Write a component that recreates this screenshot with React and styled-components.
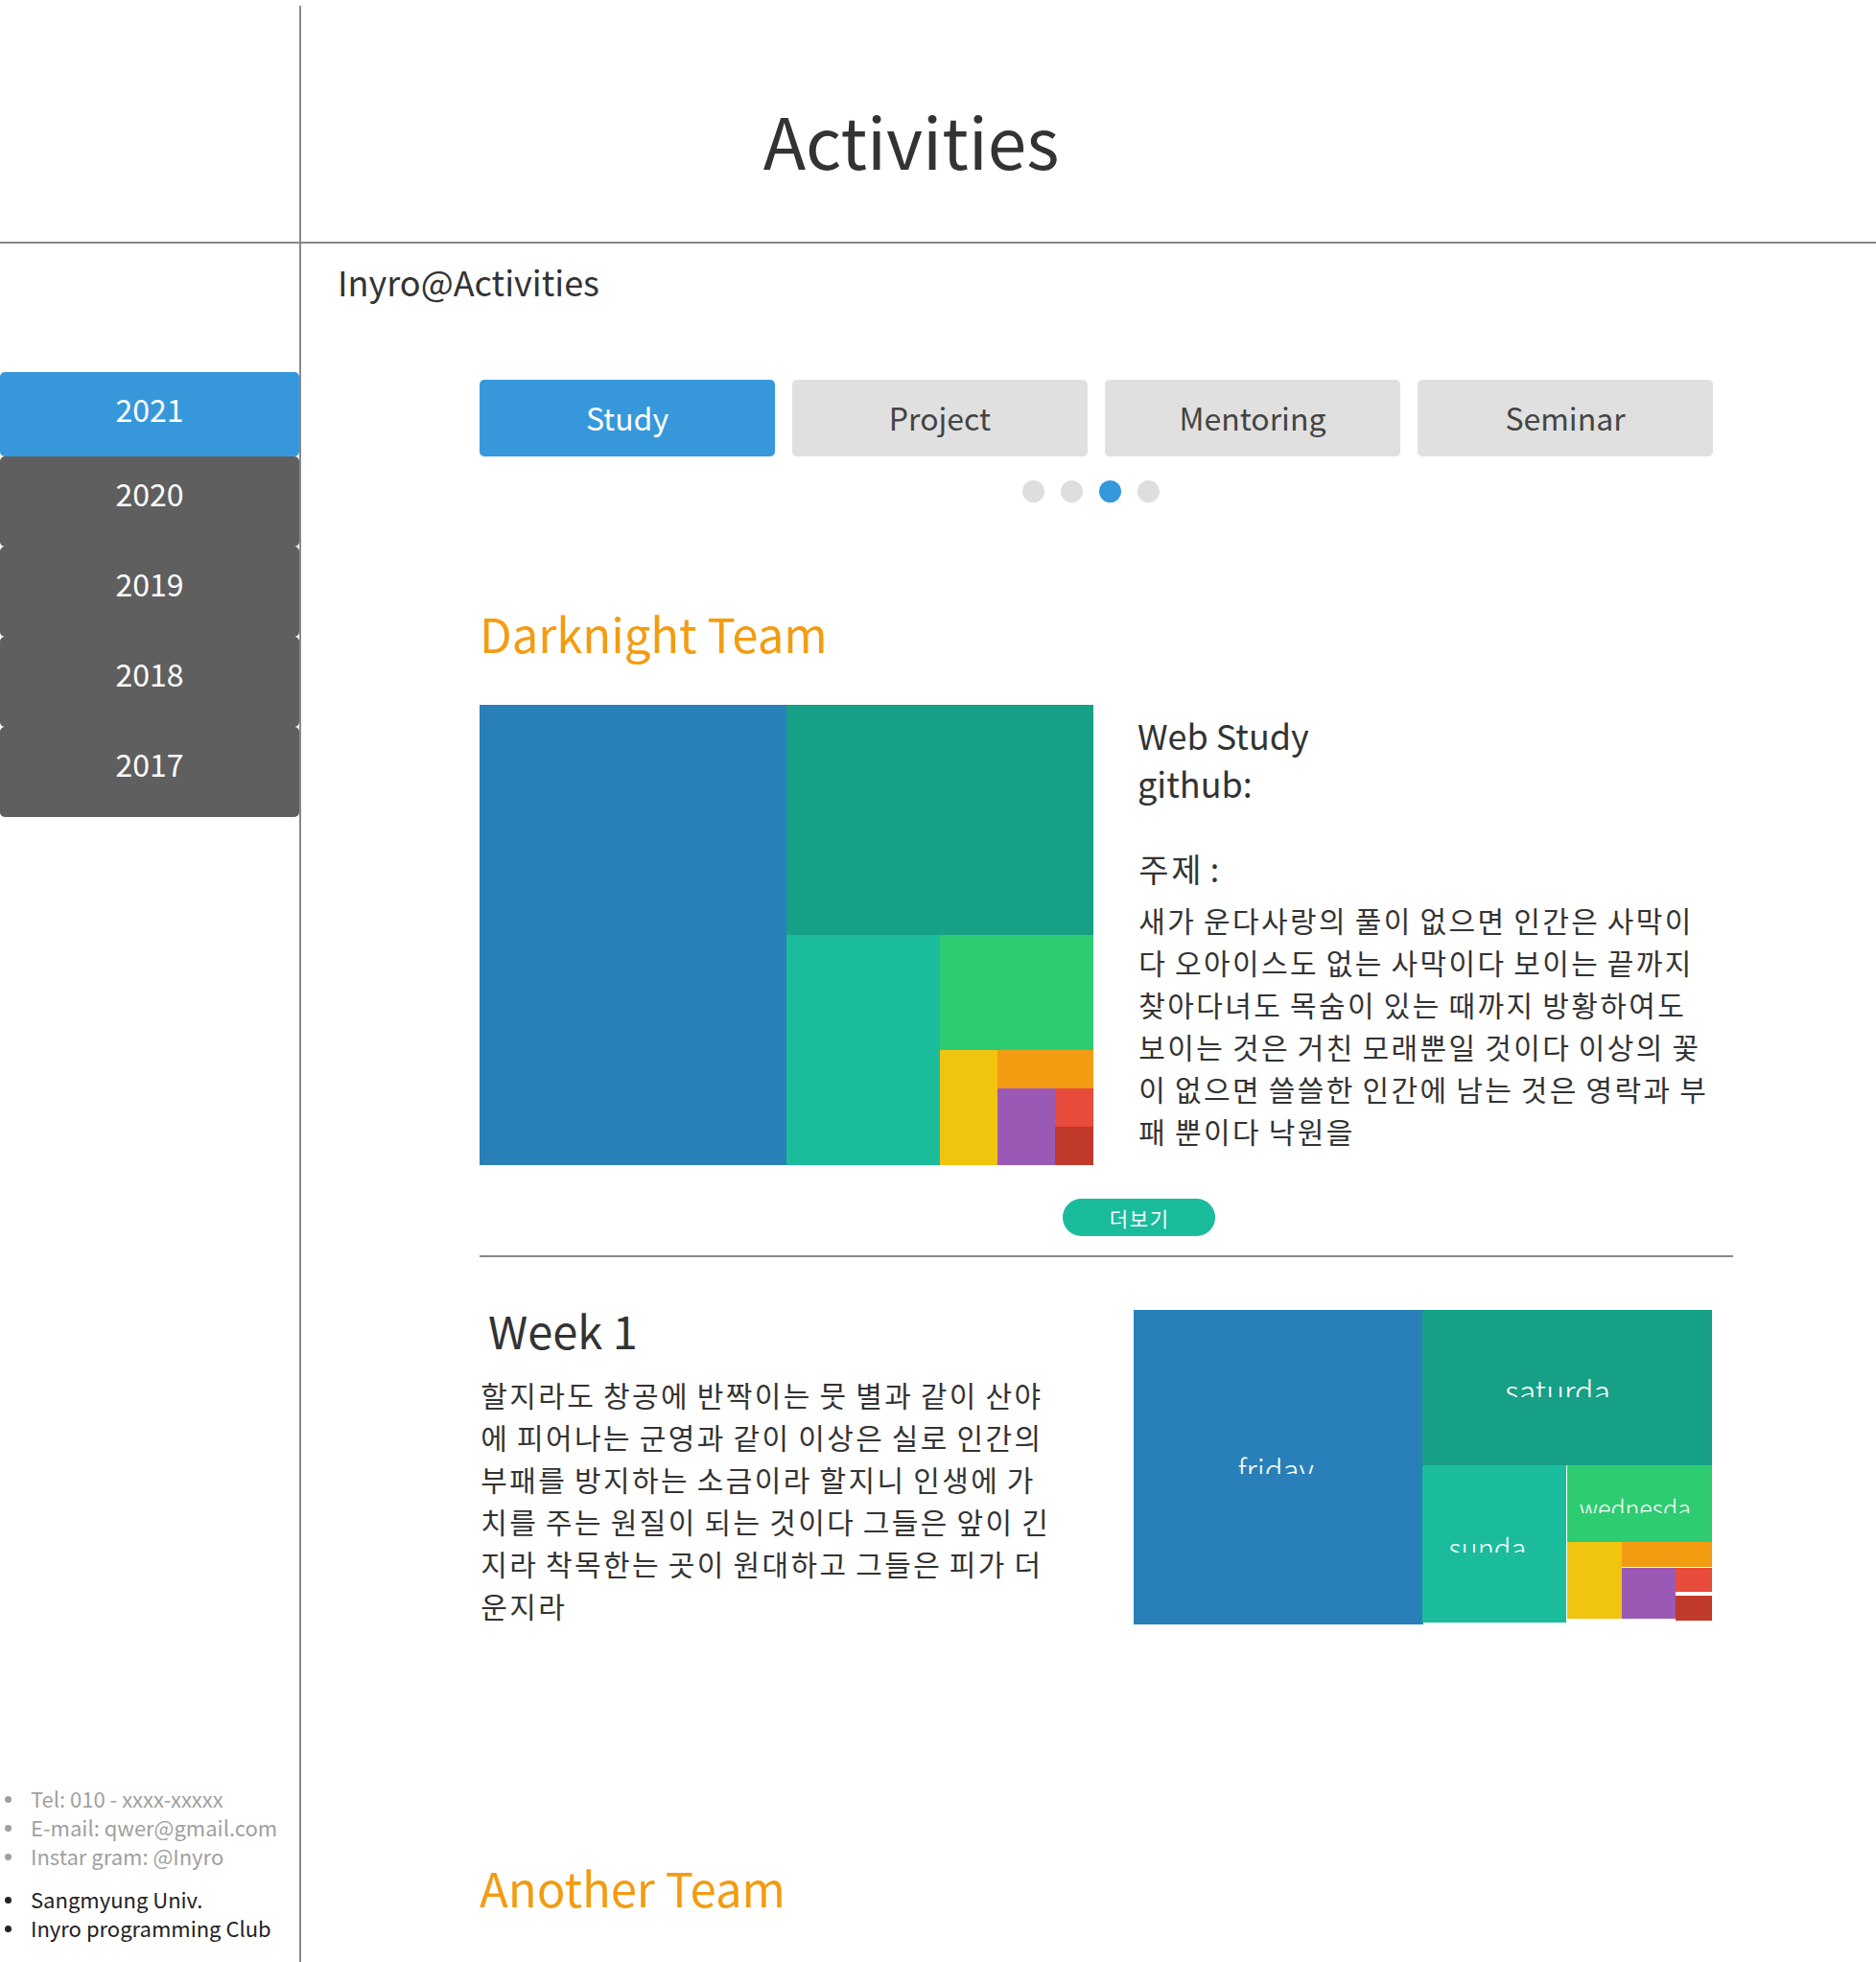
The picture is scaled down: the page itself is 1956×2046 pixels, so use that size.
import React from 'react';
import styled, { createGlobalStyle } from 'styled-components';

const GlobalStyle = createGlobalStyle`
  html, body {
    margin: 0;
    padding: 0;
    background: #fff;
  }
  body {
    font-family: "Noto Sans CJK KR", "Noto Sans", sans-serif;
    color: #333;
  }
  * {
    box-sizing: border-box;
  }
`;

const Page = styled.div`
  display: grid;
  grid-template-columns: 314px 1fr;
  grid-template-rows: 254px 1fr;
  height: 100vh;
  overflow: hidden;
`;

const Corner = styled.div`
  margin-top: 6px;
  border-right: 2px solid #888;
  border-bottom: 2px solid #888;
`;

const Header = styled.header`
  border-bottom: 2px solid #888;
  padding: 105px 370px 0 0;
  text-align: center;
`;

const PageTitle = styled.h1`
  margin: 0;
  font-size: 73px;
  font-weight: 400;
  line-height: 80px;
  color: #333;
`;

const Sidebar = styled.aside`
  display: flex;
  flex-direction: column;
  border-right: 2px solid #888;
  min-height: 0;
`;

const YearList = styled.ul`
  list-style: none;
  margin: 134px 0 0;
  padding: 0;
`;

const YearItem = styled.li`
  height: ${({ $active }) => ($active ? '88px' : '94px')};
  padding-top: 18px;
  border-radius: 5px;
  background: ${({ $active }) => ($active ? '#3698db' : '#5f5f5f')};
  color: #fff;
  font-size: 32px;
  line-height: 40px;
  text-align: center;
`;

const Contact = styled.div`
  margin-top: auto;
  padding-bottom: 21px;
  display: flex;
  flex-direction: column;
  gap: 15px;
`;

const InfoList = styled.ul`
  list-style: none;
  margin: 0;
  padding: 0;
  color: ${({ $muted }) => ($muted ? '#a0a0a0' : '#222')};
`;

const InfoItem = styled.li`
  display: flex;
  align-items: center;
  font-size: 22px;
  line-height: 30px;
  white-space: nowrap;

  &::before {
    content: '';
    flex-shrink: 0;
    width: 7px;
    height: 7px;
    margin: 2px 20px 0 5px;
    border-radius: 50%;
    background: currentColor;
  }
`;

const Main = styled.main`
  display: flex;
  flex-direction: column;
  min-width: 0;
`;

const SubTitle = styled.h2`
  margin: 17px 0 0 38px;
  font-size: 36px;
  font-weight: 400;
  line-height: 44px;
  color: #333;
`;

const Content = styled.div`
  display: flex;
  flex-direction: column;
  margin-left: 186px;
`;

const Tabs = styled.div`
  display: grid;
  grid-template-columns: repeat(4, 1fr);
  gap: 18px;
  width: 1286px;
  margin-top: 81px;
`;

const Tab = styled.button`
  height: 80px;
  border: none;
  border-radius: 5px;
  background: ${({ $active }) => ($active ? '#3698db' : '#e0e0e0')};
  color: ${({ $active }) => ($active ? '#fff' : '#444')};
  font-family: inherit;
  font-size: 32px;
  display: flex;
  align-items: center;
  justify-content: center;
  padding-bottom: 3px;
`;

const Dots = styled.div`
  display: flex;
  justify-content: center;
  gap: 17px;
  width: 1286px;
  margin-top: 25px;
  padding-right: 11px;
`;

const Dot = styled.span`
  width: 23px;
  height: 23px;
  border-radius: 50%;
  background: ${({ $active }) => ($active ? '#3498db' : '#dedede')};
`;

const TeamTitle = styled.h2`
  margin: ${({ $gap }) => $gap}px 0 0;
  font-size: 49px;
  font-weight: 400;
  line-height: 60px;
  color: #f39c12;
`;

const TeamRow = styled.div`
  display: flex;
  align-items: flex-start;
  gap: 46px;
  margin-top: 45px;
`;

const TeamText = styled.div`
  width: 600px;
  padding-top: 6px;
`;

const InfoHead = styled.div`
  font-size: 36px;
  line-height: 50px;
`;

const TopicLabel = styled.div`
  margin-top: 42px;
  font-size: 34px;
  line-height: 46px;
`;

const Body = styled.p`
  margin: ${({ $gap }) => $gap}px 0 0;
  font-size: 30px;
  line-height: 44px;
  word-spacing: 1px;
  color: #333;
`;

/* one Hangul syllable set in a full-width cell, as the reference font does */
const Syl = styled.span`
  display: inline-block;
  width: 1em;
  text-align: center;
`;

const Hangul = ({ text }) =>
  Array.from(text).map((ch, i) => (ch === ' ' || ch === ':' ? ch : <Syl key={i}>{ch}</Syl>));

const MoreButton = styled.button`
  align-self: flex-start;
  width: 159px;
  height: 39px;
  margin: 35px 0 0 608px;
  border: none;
  border-radius: 20px;
  background: #1abc9c;
  color: #fff;
  font-family: inherit;
  font-size: 21px;
  display: flex;
  align-items: center;
  justify-content: center;
`;

const Divider = styled.hr`
  width: 1307px;
  height: 0;
  margin: 20px 0 0;
  border: 0;
  border-top: 2px solid #888;
`;

const WeekRow = styled.div`
  display: flex;
  align-items: flex-start;
  gap: 82px;
  margin-top: 50px;
`;

const WeekText = styled.div`
  width: 600px;
`;

const WeekTitle = styled.h3`
  margin: -2px 0 0;
  padding-left: 9px;
  font-size: 47px;
  font-weight: 400;
  line-height: 56px;
  color: #333;
`;

const ChartBox = styled.div`
  margin-top: ${({ $offset }) => $offset || 0}px;

  svg {
    display: block;
  }
`;

const Treemap = ({ id, width, height, cells }) => (
  <svg width={width} height={height} viewBox={`0 0 ${width} ${height}`}>
    <defs>
      {cells
        .filter((c) => c.label)
        .map((c) => (
          <clipPath key={c.label} id={`${id}-${c.label}`}>
            <rect x={c.clip[0]} y={c.clip[1]} width={c.clip[2]} height={c.clip[3]} />
          </clipPath>
        ))}
    </defs>
    {cells.map((c, i) => (
      <rect key={i} x={c.x} y={c.y} width={c.w} height={c.h} fill={c.color} />
    ))}
    {cells
      .filter((c) => c.label)
      .map((c) => (
        <text
          key={c.label}
          x={c.cx}
          y={c.base}
          fontSize={c.size}
          fill="#fff"
          textAnchor="middle"
          fontFamily='"Noto Sans CJK KR", sans-serif'
          fontWeight="300"
          clipPath={`url(#${id}-${c.label})`}
        >
          {c.label}
        </text>
      ))}
  </svg>
);

const studyCells = [
  { x: 0, y: 0, w: 320, h: 480, color: '#2980b9' },
  { x: 320, y: 0, w: 320, h: 240, color: '#16a085' },
  { x: 320, y: 240, w: 160, h: 240, color: '#1abc9c' },
  { x: 480, y: 240, w: 160, h: 120, color: '#2ecc71' },
  { x: 480, y: 360, w: 60, h: 120, color: '#f1c40f' },
  { x: 540, y: 360, w: 100, h: 40, color: '#f39c12' },
  { x: 540, y: 400, w: 60, h: 80, color: '#9b59b6' },
  { x: 600, y: 400, w: 40, h: 40, color: '#e74c3c' },
  { x: 600, y: 440, w: 40, h: 40, color: '#c0392b' },
];

const weekCells = [
  { x: 0, y: 0, w: 302, h: 328, color: '#2980b9', label: 'friday', cx: 148, base: 179, size: 31, clip: [0, 0, 302, 171] },
  { x: 301, y: 0, w: 302, h: 162, color: '#16a085', label: 'saturday', cx: 450, base: 97, size: 32, clip: [301, 0, 196, 91] },
  { x: 301, y: 162, w: 150, h: 164, color: '#1abc9c', label: 'sunday', cx: 376, base: 260, size: 29, clip: [301, 162, 108, 91] },
  { x: 452, y: 162, w: 152, h: 80, color: '#2ecc71', label: 'wednesday', cx: 529, base: 217, size: 25, clip: [452, 162, 129, 50] },
  { x: 452, y: 242, w: 57, h: 80, color: '#f1c40f' },
  { x: 509, y: 242, w: 94, h: 26, color: '#f39c12' },
  { x: 509, y: 269, w: 56, h: 53, color: '#9b59b6' },
  { x: 565, y: 269, w: 38, h: 25, color: '#e74c3c' },
  { x: 565, y: 298, w: 38, h: 26, color: '#c0392b' },
];

const years = ['2021', '2020', '2019', '2018', '2017'];
const tabs = ['Study', 'Project', 'Mentoring', 'Seminar'];

const studyTopic =
  '새가 운다사랑의 풀이 없으면 인간은 사막이다 오아이스도 없는 사막이다 보이는 끝까지 찾아다녀도 목숨이 있는 때까지 방황하여도 보이는 것은 거친 모래뿐일 것이다 이상의 꽃이 없으면 쓸쓸한 인간에 남는 것은 영락과 부패 뿐이다 낙원을';
const weekNote =
  '할지라도 창공에 반짝이는 뭇 별과 같이 산야에 피어나는 군영과 같이 이상은 실로 인간의 부패를 방지하는 소금이라 할지니 인생에 가치를 주는 원질이 되는 것이다 그들은 앞이 긴지라 착목한는 곳이 원대하고 그들은 피가 더운지라';

const App = () => {
  return (
    <>
      <GlobalStyle />
      <Page>
        <Corner />
        <Header>
          <PageTitle>Activities</PageTitle>
        </Header>

        <Sidebar>
          <YearList>
            {years.map((y, i) => (
              <YearItem key={y} $active={i === 0}>
                {y}
              </YearItem>
            ))}
          </YearList>
          <Contact>
            <InfoList $muted>
              <InfoItem>Tel: 010 - xxxx-xxxxx</InfoItem>
              <InfoItem>E-mail: qwer@gmail.com</InfoItem>
              <InfoItem>Instar gram: @Inyro</InfoItem>
            </InfoList>
            <InfoList>
              <InfoItem>Sangmyung Univ.</InfoItem>
              <InfoItem>Inyro programming Club</InfoItem>
            </InfoList>
          </Contact>
        </Sidebar>

        <Main>
          <SubTitle>Inyro@Activities</SubTitle>
          <Content>
            <Tabs>
              {tabs.map((t, i) => (
                <Tab key={t} $active={i === 0}>
                  {t}
                </Tab>
              ))}
            </Tabs>
            <Dots>
              {[0, 1, 2, 3].map((d) => (
                <Dot key={d} $active={d === 2} />
              ))}
            </Dots>

            <TeamTitle $gap={106}>Darknight Team</TeamTitle>
            <TeamRow>
              <ChartBox>
                <Treemap id="study" width={640} height={480} cells={studyCells} />
              </ChartBox>
              <TeamText>
                <InfoHead>
                  Web Study
                  <br />
                  github:
                </InfoHead>
                <TopicLabel>
                  <Hangul text="주제 :" />
                </TopicLabel>
                <Body $gap={8}>
                  <Hangul text={studyTopic} />
                </Body>
              </TeamText>
            </TeamRow>
            <MoreButton>
              <Hangul text="더보기" />
            </MoreButton>
            <Divider />

            <WeekRow>
              <WeekText>
                <WeekTitle>Week 1</WeekTitle>
                <Body $gap={17}>
                  <Hangul text={weekNote} />
                </Body>
              </WeekText>
              <ChartBox $offset={5}>
                <Treemap id="week" width={603} height={328} cells={weekCells} />
              </ChartBox>
            </WeekRow>

            <TeamTitle $gap={242}>Another Team</TeamTitle>
          </Content>
        </Main>
      </Page>
    </>
  );
};

export default App;
